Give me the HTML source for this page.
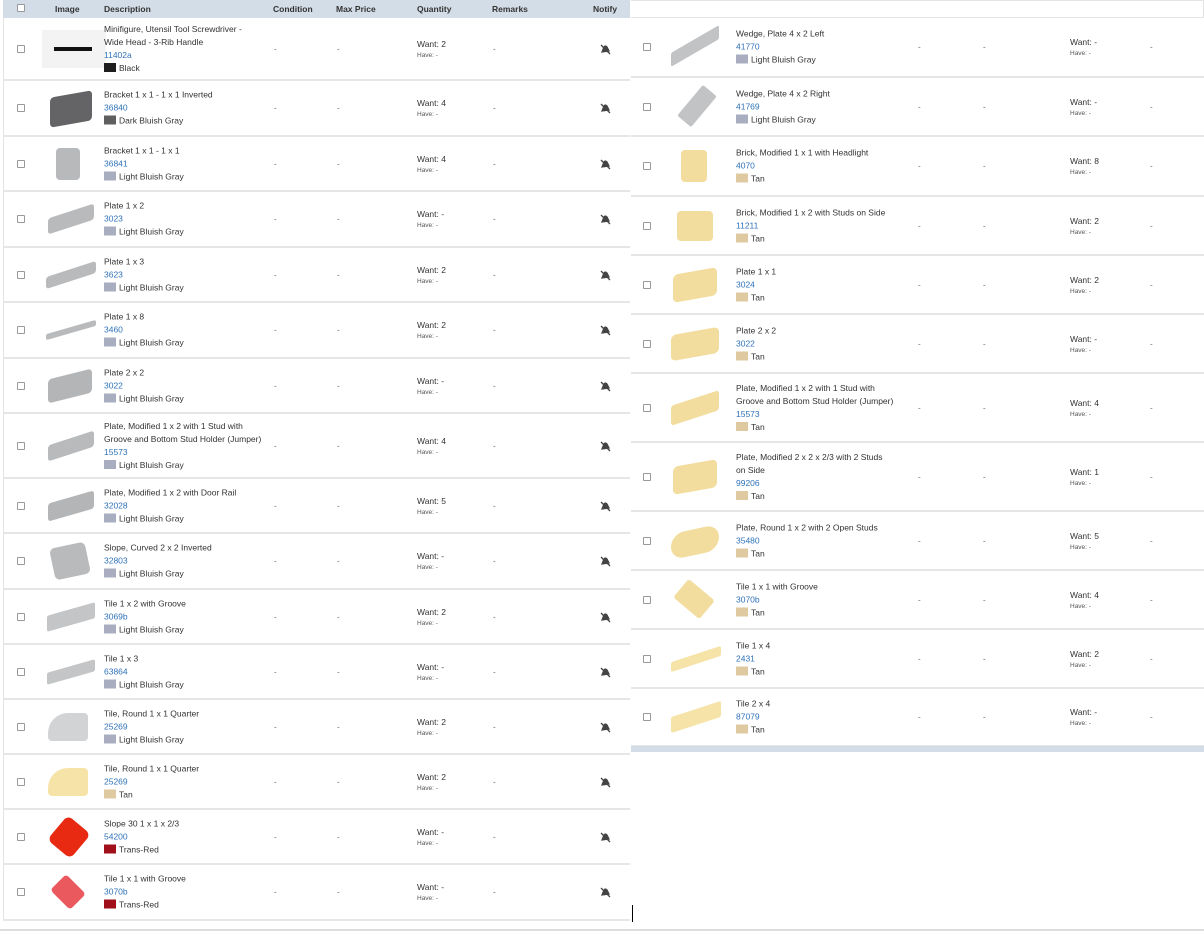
<!DOCTYPE html>
<html><head><meta charset="utf-8"><style>
*{margin:0;padding:0;box-sizing:border-box}
body{width:1204px;height:932px;background:#fff;font-family:"Liberation Sans",Arial,sans-serif;color:#333;position:relative;overflow:hidden}
.hd{position:absolute;top:0;left:3px;width:627px;height:18px;background:#d3dde7;font-size:8.5px;font-weight:bold;color:#333}
.hd span{position:absolute;top:4px}
.hr{position:absolute;top:0;left:631px;width:573px;height:18px;border:1px solid #e4e4e4;border-left:none}
.r{position:absolute;border-bottom:2px solid #e6e6e6;background:#fff}
.L{left:3px;width:627px;border-left:1px solid #e4e4e4}
.R{left:631px;width:573px}
.r>*{position:absolute;top:50%;transform:translateY(-50%)}
.cb{width:8px;height:8px;border:1px solid #999;border-radius:1px;background:#fff}
.L .cb{left:13px}.R .cb{left:12px}
.d{font-size:8.5px;line-height:13px;color:#333;width:165px}
.L .d{left:100px}.R .d{left:105px;width:180px}
.d a{color:#2f72b8;display:block}
.d s{display:inline-block;width:12px;height:9px;vertical-align:-1px;margin-right:3px}
.c,.m,.rm{font-size:8px;color:#666}
.L .c{left:270px}.L .m{left:333px}.L .q{left:413px}.L .rm{left:489px}
.R .c{left:287px}.R .m{left:352px}.R .q{left:439px}.R .rm{left:519px}
.q{font-size:8.5px;line-height:14px;color:#333}
.q small{display:block;font-size:6.5px;line-height:10px;color:#555}
.n{left:595px;width:12px;height:12px}
.im{left:40px;width:56px;height:40px}
.R .im{left:38px}
.p{position:absolute}
</style></head><body>
<div class="hd"><i class="cb" style="position:absolute;left:14px;top:4px"></i><span style="left:52px">Image</span><span style="left:101px">Description</span><span style="left:270px">Condition</span><span style="left:333px">Max Price</span><span style="left:414px">Quantity</span><span style="left:489px">Remarks</span><span style="left:590px">Notify</span></div>
<div class="hr"></div>

<!-- LEFT -->
<div class="r L" style="top:18px;height:63px"><i class="cb"></i><div class="im" style="background:#f3f3f3;width:64px;height:38px;left:38px"><i class="p" style="left:12px;top:17px;width:38px;height:4px;background:#111"></i></div><div class="d">Minifigure, Utensil Tool Screwdriver -<br>Wide Head - 3-Rib Handle<a>11402a</a><span><s style="background:#1e1e1e"></s>Black</span></div><span class="c">-</span><span class="m">-</span><div class="q">Want: 2<small>Have: -</small></div><span class="rm">-</span><svg class="n" viewBox="0 0 12 12"><path d="M3 9L5 4Q6 2 8 4L10 8Z M2 2L11 11" stroke="#444" stroke-width="1.3" fill="#444"/></svg></div>
<div class="r L" style="top:81px;height:56px"><i class="cb"></i><div class="im"><i class="p" style="left:6px;top:6px;width:42px;height:30px;background:#646466;border-radius:4px;transform:skewY(-10deg)"></i></div><div class="d">Bracket 1 x 1 - 1 x 1 Inverted<a>36840</a><span><s style="background:#5f5f5f"></s>Dark Bluish Gray</span></div><span class="c">-</span><span class="m">-</span><div class="q">Want: 4<small>Have: -</small></div><span class="rm">-</span><svg class="n" viewBox="0 0 12 12"><path d="M3 9L5 4Q6 2 8 4L10 8Z M2 2L11 11" stroke="#444" stroke-width="1.3" fill="#444"/></svg></div>
<div class="r L" style="top:137px;height:55px"><i class="cb"></i><div class="im"><i class="p" style="left:12px;top:4px;width:24px;height:32px;background:#b8b9bb;border-radius:4px"></i></div><div class="d">Bracket 1 x 1 - 1 x 1<a>36841</a><span><s style="background:#a8aec0"></s>Light Bluish Gray</span></div><span class="c">-</span><span class="m">-</span><div class="q">Want: 4<small>Have: -</small></div><span class="rm">-</span><svg class="n" viewBox="0 0 12 12"><path d="M3 9L5 4Q6 2 8 4L10 8Z M2 2L11 11" stroke="#444" stroke-width="1.3" fill="#444"/></svg></div>
<div class="r L" style="top:192px;height:56px"><i class="cb"></i><div class="im"><i class="p" style="left:4px;top:12px;width:46px;height:16px;background:#b9babc;border-radius:3px;transform:skewY(-18deg)"></i></div><div class="d">Plate 1 x 2<a>3023</a><span><s style="background:#a8aec0"></s>Light Bluish Gray</span></div><span class="c">-</span><span class="m">-</span><div class="q">Want: -<small>Have: -</small></div><span class="rm">-</span><svg class="n" viewBox="0 0 12 12"><path d="M3 9L5 4Q6 2 8 4L10 8Z M2 2L11 11" stroke="#444" stroke-width="1.3" fill="#444"/></svg></div>
<div class="r L" style="top:248px;height:55px"><i class="cb"></i><div class="im"><i class="p" style="left:2px;top:14px;width:50px;height:12px;background:#b9babc;border-radius:3px;transform:skewY(-18deg)"></i></div><div class="d">Plate 1 x 3<a>3623</a><span><s style="background:#a8aec0"></s>Light Bluish Gray</span></div><span class="c">-</span><span class="m">-</span><div class="q">Want: 2<small>Have: -</small></div><span class="rm">-</span><svg class="n" viewBox="0 0 12 12"><path d="M3 9L5 4Q6 2 8 4L10 8Z M2 2L11 11" stroke="#444" stroke-width="1.3" fill="#444"/></svg></div>
<div class="r L" style="top:303px;height:56px"><i class="cb"></i><div class="im"><i class="p" style="left:2px;top:17px;width:50px;height:6px;background:#b9babc;border-radius:2px;transform:skewY(-16deg)"></i></div><div class="d">Plate 1 x 8<a>3460</a><span><s style="background:#a8aec0"></s>Light Bluish Gray</span></div><span class="c">-</span><span class="m">-</span><div class="q">Want: 2<small>Have: -</small></div><span class="rm">-</span><svg class="n" viewBox="0 0 12 12"><path d="M3 9L5 4Q6 2 8 4L10 8Z M2 2L11 11" stroke="#444" stroke-width="1.3" fill="#444"/></svg></div>
<div class="r L" style="top:359px;height:55px"><i class="cb"></i><div class="im"><i class="p" style="left:4px;top:8px;width:44px;height:24px;background:#b4b5b7;border-radius:4px;transform:skewY(-14deg)"></i></div><div class="d">Plate 2 x 2<a>3022</a><span><s style="background:#a8aec0"></s>Light Bluish Gray</span></div><span class="c">-</span><span class="m">-</span><div class="q">Want: -<small>Have: -</small></div><span class="rm">-</span><svg class="n" viewBox="0 0 12 12"><path d="M3 9L5 4Q6 2 8 4L10 8Z M2 2L11 11" stroke="#444" stroke-width="1.3" fill="#444"/></svg></div>
<div class="r L" style="top:414px;height:65px"><i class="cb"></i><div class="im"><i class="p" style="left:4px;top:12px;width:46px;height:16px;background:#b9babc;border-radius:3px;transform:skewY(-18deg)"></i></div><div class="d">Plate, Modified 1 x 2 with 1 Stud with<br>Groove and Bottom Stud Holder (Jumper)<a>15573</a><span><s style="background:#a8aec0"></s>Light Bluish Gray</span></div><span class="c">-</span><span class="m">-</span><div class="q">Want: 4<small>Have: -</small></div><span class="rm">-</span><svg class="n" viewBox="0 0 12 12"><path d="M3 9L5 4Q6 2 8 4L10 8Z M2 2L11 11" stroke="#444" stroke-width="1.3" fill="#444"/></svg></div>
<div class="r L" style="top:479px;height:55px"><i class="cb"></i><div class="im"><i class="p" style="left:4px;top:11px;width:46px;height:18px;background:#b4b5b7;border-radius:3px;transform:skewY(-16deg)"></i></div><div class="d">Plate, Modified 1 x 2 with Door Rail<a>32028</a><span><s style="background:#a8aec0"></s>Light Bluish Gray</span></div><span class="c">-</span><span class="m">-</span><div class="q">Want: 5<small>Have: -</small></div><span class="rm">-</span><svg class="n" viewBox="0 0 12 12"><path d="M3 9L5 4Q6 2 8 4L10 8Z M2 2L11 11" stroke="#444" stroke-width="1.3" fill="#444"/></svg></div>
<div class="r L" style="top:534px;height:56px"><i class="cb"></i><div class="im"><i class="p" style="left:8px;top:4px;width:36px;height:32px;background:#b9babc;border-radius:5px;transform:rotate(-12deg)"></i></div><div class="d">Slope, Curved 2 x 2 Inverted<a>32803</a><span><s style="background:#a8aec0"></s>Light Bluish Gray</span></div><span class="c">-</span><span class="m">-</span><div class="q">Want: -<small>Have: -</small></div><span class="rm">-</span><svg class="n" viewBox="0 0 12 12"><path d="M3 9L5 4Q6 2 8 4L10 8Z M2 2L11 11" stroke="#444" stroke-width="1.3" fill="#444"/></svg></div>
<div class="r L" style="top:590px;height:55px"><i class="cb"></i><div class="im"><i class="p" style="left:3px;top:12px;width:48px;height:16px;background:#c4c5c7;border-radius:2px;transform:skewY(-16deg)"></i></div><div class="d">Tile 1 x 2 with Groove<a>3069b</a><span><s style="background:#a8aec0"></s>Light Bluish Gray</span></div><span class="c">-</span><span class="m">-</span><div class="q">Want: 2<small>Have: -</small></div><span class="rm">-</span><svg class="n" viewBox="0 0 12 12"><path d="M3 9L5 4Q6 2 8 4L10 8Z M2 2L11 11" stroke="#444" stroke-width="1.3" fill="#444"/></svg></div>
<div class="r L" style="top:645px;height:55px"><i class="cb"></i><div class="im"><i class="p" style="left:3px;top:14px;width:48px;height:12px;background:#c4c5c7;border-radius:2px;transform:skewY(-16deg)"></i></div><div class="d">Tile 1 x 3<a>63864</a><span><s style="background:#a8aec0"></s>Light Bluish Gray</span></div><span class="c">-</span><span class="m">-</span><div class="q">Want: -<small>Have: -</small></div><span class="rm">-</span><svg class="n" viewBox="0 0 12 12"><path d="M3 9L5 4Q6 2 8 4L10 8Z M2 2L11 11" stroke="#444" stroke-width="1.3" fill="#444"/></svg></div>
<div class="r L" style="top:700px;height:55px"><i class="cb"></i><div class="im"><i class="p" style="left:4px;top:6px;width:40px;height:28px;background:#d2d3d5;border-radius:20px 4px 4px 4px"></i></div><div class="d">Tile, Round 1 x 1 Quarter<a>25269</a><span><s style="background:#a8aec0"></s>Light Bluish Gray</span></div><span class="c">-</span><span class="m">-</span><div class="q">Want: 2<small>Have: -</small></div><span class="rm">-</span><svg class="n" viewBox="0 0 12 12"><path d="M3 9L5 4Q6 2 8 4L10 8Z M2 2L11 11" stroke="#444" stroke-width="1.3" fill="#444"/></svg></div>
<div class="r L" style="top:755px;height:55px"><i class="cb"></i><div class="im"><i class="p" style="left:4px;top:6px;width:40px;height:28px;background:#f5e3a8;border-radius:20px 4px 4px 4px"></i></div><div class="d">Tile, Round 1 x 1 Quarter<a>25269</a><span><s style="background:#dec9a0"></s>Tan</span></div><span class="c">-</span><span class="m">-</span><div class="q">Want: 2<small>Have: -</small></div><span class="rm">-</span><svg class="n" viewBox="0 0 12 12"><path d="M3 9L5 4Q6 2 8 4L10 8Z M2 2L11 11" stroke="#444" stroke-width="1.3" fill="#444"/></svg></div>
<div class="r L" style="top:810px;height:55px"><i class="cb"></i><div class="im"><i class="p" style="left:10px;top:4px;width:30px;height:32px;background:#e82a12;border-radius:6px;transform:rotate(40deg)"></i></div><div class="d">Slope 30 1 x 1 x 2/3<a>54200</a><span><s style="background:#a00f1a"></s>Trans-Red</span></div><span class="c">-</span><span class="m">-</span><div class="q">Want: -<small>Have: -</small></div><span class="rm">-</span><svg class="n" viewBox="0 0 12 12"><path d="M3 9L5 4Q6 2 8 4L10 8Z M2 2L11 11" stroke="#444" stroke-width="1.3" fill="#444"/></svg></div>
<div class="r L" style="top:865px;height:56px"><i class="cb"></i><div class="im"><i class="p" style="left:10px;top:6px;width:28px;height:28px;background:#e9595e;border-radius:4px;transform:rotate(45deg) scaleY(.8)"></i></div><div class="d">Tile 1 x 1 with Groove<a>3070b</a><span><s style="background:#a00f1a"></s>Trans-Red</span></div><span class="c">-</span><span class="m">-</span><div class="q">Want: -<small>Have: -</small></div><span class="rm">-</span><svg class="n" viewBox="0 0 12 12"><path d="M3 9L5 4Q6 2 8 4L10 8Z M2 2L11 11" stroke="#444" stroke-width="1.3" fill="#444"/></svg></div>

<!-- RIGHT -->
<div class="r R" style="top:18px;height:60px"><i class="cb"></i><div class="im"><i class="p" style="left:2px;top:12px;width:48px;height:14px;background:#c2c3c5;border-radius:2px;transform:skewY(-30deg)"></i></div><div class="d">Wedge, Plate 4 x 2 Left<a>41770</a><span><s style="background:#a8aec0"></s>Light Bluish Gray</span></div><span class="c">-</span><span class="m">-</span><div class="q">Want: -<small>Have: -</small></div><span class="rm">-</span></div>
<div class="r R" style="top:78px;height:59px"><i class="cb"></i><div class="im"><i class="p" style="left:8px;top:10px;width:40px;height:18px;background:#c2c3c5;border-radius:2px;transform:rotate(-50deg)"></i></div><div class="d">Wedge, Plate 4 x 2 Right<a>41769</a><span><s style="background:#a8aec0"></s>Light Bluish Gray</span></div><span class="c">-</span><span class="m">-</span><div class="q">Want: -<small>Have: -</small></div><span class="rm">-</span></div>
<div class="r R" style="top:137px;height:60px"><i class="cb"></i><div class="im"><i class="p" style="left:12px;top:4px;width:26px;height:32px;background:#f2dc9e;border-radius:4px"></i></div><div class="d">Brick, Modified 1 x 1 with Headlight<a>4070</a><span><s style="background:#dec9a0"></s>Tan</span></div><span class="c">-</span><span class="m">-</span><div class="q">Want: 8<small>Have: -</small></div><span class="rm">-</span></div>
<div class="r R" style="top:197px;height:59px"><i class="cb"></i><div class="im"><i class="p" style="left:8px;top:5px;width:36px;height:30px;background:#f2dc9e;border-radius:4px"></i></div><div class="d">Brick, Modified 1 x 2 with Studs on Side<a>11211</a><span><s style="background:#dec9a0"></s>Tan</span></div><span class="c">-</span><span class="m">-</span><div class="q">Want: 2<small>Have: -</small></div><span class="rm">-</span></div>
<div class="r R" style="top:256px;height:59px"><i class="cb"></i><div class="im"><i class="p" style="left:4px;top:6px;width:44px;height:28px;background:#f2dc9e;border-radius:5px;transform:skewY(-10deg)"></i></div><div class="d">Plate 1 x 1<a>3024</a><span><s style="background:#dec9a0"></s>Tan</span></div><span class="c">-</span><span class="m">-</span><div class="q">Want: 2<small>Have: -</small></div><span class="rm">-</span></div>
<div class="r R" style="top:315px;height:59px"><i class="cb"></i><div class="im"><i class="p" style="left:2px;top:7px;width:48px;height:26px;background:#f2dc9e;border-radius:5px;transform:skewY(-10deg)"></i></div><div class="d">Plate 2 x 2<a>3022</a><span><s style="background:#dec9a0"></s>Tan</span></div><span class="c">-</span><span class="m">-</span><div class="q">Want: -<small>Have: -</small></div><span class="rm">-</span></div>
<div class="r R" style="top:374px;height:69px"><i class="cb"></i><div class="im"><i class="p" style="left:2px;top:10px;width:48px;height:20px;background:#f2dc9e;border-radius:3px;transform:skewY(-18deg)"></i></div><div class="d">Plate, Modified 1 x 2 with 1 Stud with<br>Groove and Bottom Stud Holder (Jumper)<a>15573</a><span><s style="background:#dec9a0"></s>Tan</span></div><span class="c">-</span><span class="m">-</span><div class="q">Want: 4<small>Have: -</small></div><span class="rm">-</span></div>
<div class="r R" style="top:443px;height:69px"><i class="cb"></i><div class="im"><i class="p" style="left:4px;top:6px;width:44px;height:28px;background:#f2dc9e;border-radius:5px;transform:skewY(-10deg)"></i></div><div class="d">Plate, Modified 2 x 2 x 2/3 with 2 Studs<br>on Side<a>99206</a><span><s style="background:#dec9a0"></s>Tan</span></div><span class="c">-</span><span class="m">-</span><div class="q">Want: 1<small>Have: -</small></div><span class="rm">-</span></div>
<div class="r R" style="top:512px;height:59px"><i class="cb"></i><div class="im"><i class="p" style="left:2px;top:8px;width:48px;height:26px;background:#f2dc9e;border-radius:14px;transform:skewY(-12deg)"></i></div><div class="d">Plate, Round 1 x 2 with 2 Open Studs<a>35480</a><span><s style="background:#dec9a0"></s>Tan</span></div><span class="c">-</span><span class="m">-</span><div class="q">Want: 5<small>Have: -</small></div><span class="rm">-</span></div>
<div class="r R" style="top:571px;height:59px"><i class="cb"></i><div class="im"><i class="p" style="left:8px;top:4px;width:34px;height:30px;background:#f2dc9e;border-radius:3px;transform:rotate(40deg) scaleY(.8)"></i></div><div class="d">Tile 1 x 1 with Groove<a>3070b</a><span><s style="background:#dec9a0"></s>Tan</span></div><span class="c">-</span><span class="m">-</span><div class="q">Want: 4<small>Have: -</small></div><span class="rm">-</span></div>
<div class="r R" style="top:630px;height:59px"><i class="cb"></i><div class="im"><i class="p" style="left:2px;top:15px;width:50px;height:10px;background:#f5e3a8;border-radius:2px;transform:skewY(-18deg)"></i></div><div class="d">Tile 1 x 4<a>2431</a><span><s style="background:#dec9a0"></s>Tan</span></div><span class="c">-</span><span class="m">-</span><div class="q">Want: 2<small>Have: -</small></div><span class="rm">-</span></div>
<div class="r R" style="top:689px;height:58px"><i class="cb"></i><div class="im"><i class="p" style="left:2px;top:12px;width:50px;height:16px;background:#f5e3a8;border-radius:2px;transform:skewY(-18deg)"></i></div><div class="d">Tile 2 x 4<a>87079</a><span><s style="background:#dec9a0"></s>Tan</span></div><span class="c">-</span><span class="m">-</span><div class="q">Want: -<small>Have: -</small></div><span class="rm">-</span></div>
<div style="position:absolute;left:631px;top:746px;width:573px;height:6px;background:#d3dde7"></div>
<div style="position:absolute;left:632px;top:905px;width:1px;height:17px;background:#000"></div>
<div style="position:absolute;left:0;top:929px;width:1204px;height:2px;background:#ddd"></div>
</body></html>
